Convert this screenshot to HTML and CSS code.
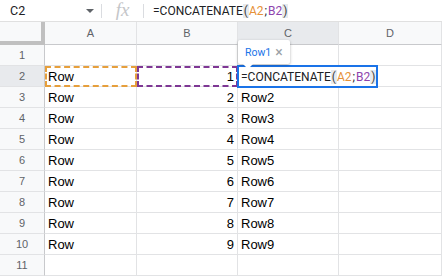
FILE: index.html
```html
<!doctype html>
<html lang="en">
<head>
<meta charset="utf-8">
<title>Sheet</title>
<link rel="stylesheet" href="styles.css">
</head>
<body>

<div class="fbar">
  <div class="namebox">C2<span class="caret"></span></div>
  <div class="sep"></div>
  <div class="fx">fx</div>
  <div class="sep"></div>
  <div class="formula">=CONCATENATE<span class="par">(</span><span class="ref-a">A2</span><span class="semi">;</span><span class="ref-b">B2</span><span class="par">)</span></div>
</div>

<div class="sheet">
  <div class="corner"></div>
  <div class="colhead">A</div>
  <div class="colhead">B</div>
  <div class="colhead active">C</div>
  <div class="colhead">D</div>

  <div class="rowhead">1</div><div class="cell"></div><div class="cell"></div><div class="cell"></div><div class="cell"></div>

  <div class="rowhead active">2</div>
  <div class="cell mark-a">Row</div>
  <div class="cell num mark-b">1</div>
  <div class="cell editing">
    <div class="tip">Row1 <span class="tip-x">×</span></div>
    <div class="editor">=CONCATENATE<span class="par">(</span><span class="ref-a">A2</span><span class="semi">;</span><span class="ref-b">B2</span><span class="par">)</span></div>
  </div>
  <div class="cell"></div>

  <div class="rowhead">3</div><div class="cell">Row</div><div class="cell num">2</div><div class="cell">Row2</div><div class="cell"></div>
  <div class="rowhead">4</div><div class="cell">Row</div><div class="cell num">3</div><div class="cell">Row3</div><div class="cell"></div>
  <div class="rowhead">5</div><div class="cell">Row</div><div class="cell num">4</div><div class="cell">Row4</div><div class="cell"></div>
  <div class="rowhead">6</div><div class="cell">Row</div><div class="cell num">5</div><div class="cell">Row5</div><div class="cell"></div>
  <div class="rowhead">7</div><div class="cell">Row</div><div class="cell num">6</div><div class="cell">Row6</div><div class="cell"></div>
  <div class="rowhead">8</div><div class="cell">Row</div><div class="cell num">7</div><div class="cell">Row7</div><div class="cell"></div>
  <div class="rowhead">9</div><div class="cell">Row</div><div class="cell num">8</div><div class="cell">Row8</div><div class="cell"></div>
  <div class="rowhead">10</div><div class="cell">Row</div><div class="cell num">9</div><div class="cell">Row9</div><div class="cell"></div>
  <div class="rowhead">11</div><div class="cell"></div><div class="cell"></div><div class="cell"></div><div class="cell"></div>
</div>

</body>
</html>
```

FILE: styles.css
```css
body {
  margin: 0;
  font: 13px "Liberation Sans", Arial, sans-serif;
  color: #000;
  background: #fff;
  overflow: hidden;
}

/* formula bar */
.fbar {
  display: flex;
  align-items: center;
  height: 21px;
  border-bottom: 1px solid #e0e0e0;
}
.namebox {
  width: 101px;
  display: flex;
  align-items: center;
  justify-content: space-between;
  padding: 0 7px 0 10px;
  box-sizing: border-box;
  font: 12.5px Roboto, sans-serif;
  color: #202124;
}
.caret {
  width: 0;
  height: 0;
  border-left: 4px solid transparent;
  border-right: 4px solid transparent;
  border-top: 4px solid #5f6368;
}
.sep {
  width: 1px;
  height: 14px;
  background: #dadce0;
}
.fx {
  width: 41px;
  text-align: center;
  font: italic 19px "Liberation Serif", serif;
  color: #c4c6c9;
  margin-top: -2px;
}
.formula {
  padding-left: 9px;
  font: 12px Roboto, sans-serif;
  color: #202124;
}
.par {
  background: #e8eaed;
  padding: 0 1px;
  color: #3c4043;
}
.semi {
  padding: 0 1px;
}
.ref-a { color: #e69138; }
.ref-b { color: #8e44ad; }

/* grid */
.sheet {
  display: grid;
  grid-template-columns: 45px 92px 101px 101px 103px;
  grid-template-rows: 23px repeat(11, 21px);
}
.corner {
  background: #f8f9fa;
  border-right: 4px solid #c0c0c0;
  border-bottom: 4px solid #c0c0c0;
}
.colhead {
  background: #f8f9fa;
  border-right: 1px solid #e2e3e5;
  border-bottom: 1px solid #c8c9cc;
  color: #5f6368;
  font-size: 11px;
  display: flex;
  align-items: center;
  justify-content: center;
}
.rowhead {
  background: #f8f9fa;
  border-right: 1px solid #c8c9cc;
  border-bottom: 1px solid #e2e3e5;
  color: #5f6368;
  font-size: 11px;
  display: flex;
  align-items: center;
  justify-content: center;
}
.colhead.active,
.rowhead.active {
  background: #e8eaed;
}
.cell {
  position: relative;
  border-right: 1px solid #e2e3e5;
  border-bottom: 1px solid #e2e3e5;
  padding: 0 3px;
  display: flex;
  align-items: flex-end;
  padding-bottom: 2px;
  box-sizing: border-box;
  white-space: nowrap;
}
.cell.num {
  justify-content: flex-end;
}
.mark-a::after,
.mark-b::after {
  content: "";
  position: absolute;
  left: 0;
  top: 0;
  right: -1px;
  bottom: -1px;
  border: 2px dashed #e69f3c;
}
.mark-b::after {
  border-color: #7e3794;
}

/* in-cell editor */
.editor {
  position: absolute;
  left: -1px;
  top: -1px;
  z-index: 2;
  height: 23px;
  width: 141px;
  box-sizing: border-box;
  border: 2px solid #1a73e8;
  background: #fff;
  padding: 0 2px;
  display: flex;
  align-items: center;
  font: 12px Roboto, sans-serif;
  color: #202124;
}
.tip {
  position: absolute;
  left: 0;
  top: -26px;
  z-index: 3;
  height: 24px;
  width: 52px;
  box-sizing: border-box;
  padding: 0 0 0 7px;
  display: flex;
  align-items: center;
  background: #fff;
  border-radius: 2px;
  box-shadow: 0 1px 3px rgba(0,0,0,0.3);
  color: #1a73e8;
  font: 10.5px Roboto, sans-serif;
}
.tip::after {
  content: "";
  position: absolute;
  left: 5px;
  bottom: -5px;
  width: 0;
  height: 0;
  border-left: 5px solid transparent;
  border-right: 5px solid transparent;
  border-top: 5px solid #fff;
}
.tip-x {
  color: #9aa0a6;
  font-size: 14px;
  margin-left: 4px;
}
```
